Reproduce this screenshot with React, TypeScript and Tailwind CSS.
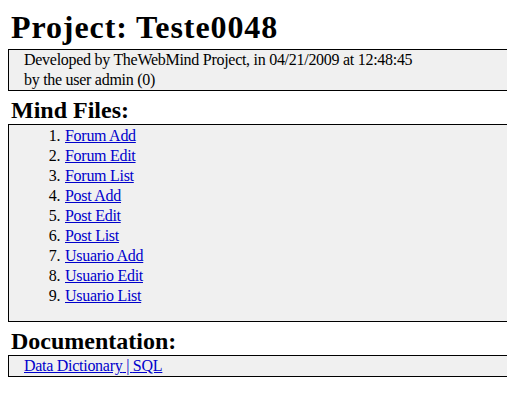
const files = [
  "Forum Add",
  "Forum Edit",
  "Forum List",
  "Post Add",
  "Post Edit",
  "Post List",
  "Usuario Add",
  "Usuario Edit",
  "Usuario List",
];

function Box({ children, className = "" }: { children: React.ReactNode; className?: string }) {
  return (
    <div
      className={`ml-2 -mr-8 border border-black bg-[#f0f0f0] pl-[15px] text-[16px] leading-[20px] tracking-[-0.28px] text-black ${className}`}
    >
      {children}
    </div>
  );
}

export default function App() {
  return (
    <div className="h-[400px] w-[507px] overflow-hidden bg-white font-['Liberation_Serif','Times_New_Roman',serif] text-black">
      <h1 className="mt-[9px] mb-[3px] pl-[11px] text-[32px] font-bold leading-[37px] tracking-[0.9px]">
        Project: Teste0048
      </h1>
      <Box>
        <div>Developed by TheWebMind Project, in 04/21/2009 at 12:48:45</div>
        <div>by the user admin (0)</div>
      </Box>

      <h2 className="mt-[6px] pl-[11px] text-[24px] font-bold leading-[27px]">Mind Files:</h2>
      <Box className="pt-px pb-[15px]">
        <ol className="list-decimal pl-10">
          {files.map((f) => (
            <li key={f} className="pl-px">
              <a href="#" className="text-[#0000cc] underline">
                {f}
              </a>
            </li>
          ))}
        </ol>
      </Box>

      <h2 className="mt-[6px] pl-[11px] text-[24px] font-bold leading-[27px]">Documentation:</h2>
      <Box>
        <span className="text-[#0000cc] underline">
          <a href="#">Data Dictionary</a> | <a href="#">SQL</a>
        </span>
      </Box>
    </div>
  );
}
